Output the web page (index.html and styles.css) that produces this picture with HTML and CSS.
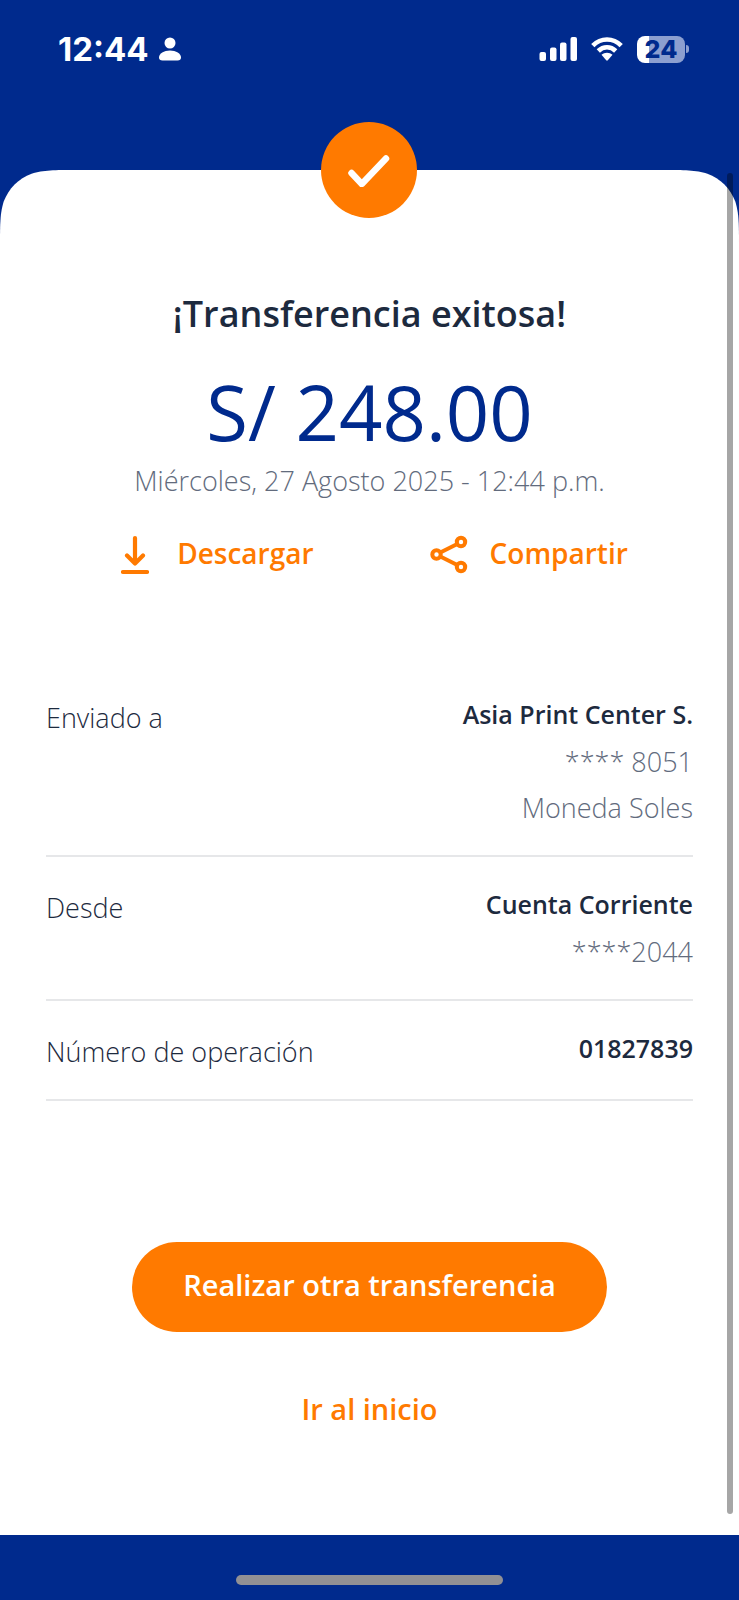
FILE: index.html
```html
<!DOCTYPE html>
<html lang="es">
<head>
<meta charset="utf-8">
<meta name="viewport" content="width=device-width, initial-scale=1">
<title>Transferencia exitosa</title>
<link rel="stylesheet" href="styles.css">
</head>
<body>
<header class="status">
  <div class="status-left">
    <span class="clock">12:44</span>
    <svg width="22" height="24" viewBox="0 0 22 24" fill="currentColor" aria-hidden="true"><circle cx="11" cy="6" r="5.5"/><path d="M0 20.500C0 16.500 5 13.500 11 13.500S22 16.500 22 20.500Q22 23.500 18.500 23.500H3.500Q0 23.500 0 20.500Z"/></svg>
  </div>
  <div class="status-right">
    <svg width="38" height="24" viewBox="0 0 38 24" fill="currentColor" aria-hidden="true"><rect x="0.500" y="15" width="6.500" height="9" rx="2"/><rect x="11" y="10.500" width="6.500" height="13.500" rx="2"/><rect x="21" y="5.500" width="6.500" height="18.500" rx="2"/><rect x="31.500" y="0" width="6.500" height="24" rx="2"/></svg>
    <svg width="32" height="24" viewBox="0 0 32 24" aria-hidden="true"><g fill="none" stroke="currentColor" stroke-width="4.600"><path d="M1.800 8.600C10 .4 22 .4 30.200 8.600"/><path d="M7.300 14C12.300 9 19.700 9 24.700 14"/></g><path d="M10.500 17.800C13.500 15 18.500 15 21.500 17.800L16.800 23.300Q16 24 15.200 23.300Z" fill="currentColor"/></svg>
    <div class="battery"><span class="battery-level">24</span><span class="battery-tip"></span></div>
  </div>
</header>

<main class="card">
  <div class="cap" aria-hidden="true">
    <svg width="77" height="77" viewBox="0 0 77 77"><path d="M77 0C54.400 0 43.400 0 31.600 3.700C18.600 8.500 8.500 18.600 3.700 31.600C0 43.400 0 54.400 0 77H77Z" fill="#fff"/></svg>
    <span class="cap-fill"></span>
    <svg width="77" height="77" viewBox="0 0 77 77"><path d="M0 0C22.600 0 33.600 0 45.400 3.700C58.400 8.500 68.500 18.600 73.300 31.600C77 43.400 77 54.400 77 77H0Z" fill="#fff"/></svg>
  </div>
  <div class="badge">
    <svg width="42" height="34" viewBox="0 0 42 34" fill="none" stroke="#fff" stroke-width="6.500" stroke-linecap="round" stroke-linejoin="round" aria-hidden="true"><path d="M3.500 20L13.800 31L38 5.500"/></svg>
  </div>
  <div class="scrollbar" aria-hidden="true"></div>

  <div class="content">
    <h1 class="title">¡Transferencia exitosa!</h1>
    <p class="amount">S/ 248.00</p>
    <p class="date">Miércoles, 27 Agosto 2025 - 12:44 p.m.</p>

    <div class="actions">
      <button class="action" type="button">
        <svg width="28" height="40" viewBox="0 0 28 40" fill="none" stroke="currentColor" stroke-width="4.200" stroke-linecap="round" stroke-linejoin="round" aria-hidden="true"><path d="M14 3V28M6 20.500L14 28.500L22 20.500M2 37H26"/></svg>
        <span>Descargar</span>
      </button>
      <button class="action" type="button">
        <svg width="38" height="40" viewBox="0 0 38 40" fill="none" stroke="currentColor" stroke-width="4" aria-hidden="true"><circle cx="6.500" cy="19.500" r="4.200"/><circle cx="31" cy="7" r="4.200"/><circle cx="31" cy="32" r="4.200"/><path d="M10.300 17.500L27.300 9M10.300 21.500L27.300 30"/></svg>
        <span>Compartir</span>
      </button>
    </div>

    <dl class="details">
      <div class="row">
        <dt>Enviado a</dt>
        <dd><strong>Asia Print Center S.</strong><span>**** 8051</span><span>Moneda Soles</span></dd>
      </div>
      <div class="row">
        <dt>Desde</dt>
        <dd><strong>Cuenta Corriente</strong><span>****2044</span></dd>
      </div>
      <div class="row">
        <dt>Número de operación</dt>
        <dd><strong>01827839</strong></dd>
      </div>
    </dl>

    <button class="primary" type="button">Realizar otra transferencia</button>
    <a class="home" href="#">Ir al inicio</a>
  </div>
</main>

<footer class="bottom"><div class="indicator"></div></footer>
</body>
</html>
```

FILE: styles.css
```css
* { box-sizing: border-box; }

body {
  margin: 0;
  min-height: 100vh;
  display: flex;
  flex-direction: column;
  background: #002a8d;
  color: #1d2a3e;
  font-family: "Open Sans", "Noto Sans", sans-serif;
}

svg { display: block; flex: none; }

button {
  border: 0;
  padding: 0;
  background: none;
  font: inherit;
  cursor: pointer;
}

.status {
  height: 170px;
  padding: 29px 50px 0 58px;
  display: flex;
  justify-content: space-between;
  align-items: flex-start;
  color: #fff;
  font-family: Inter, sans-serif;
}

.status-left,
.status-right {
  height: 40px;
  display: flex;
  align-items: center;
}

.status-left { gap: 10px; }
.status-right { gap: 14px; }

.clock {
  font-size: 33px;
  line-height: 42px;
  font-weight: 700;
}

.battery { display: flex; align-items: center; gap: 1px; }

.battery-level {
  width: 48px;
  height: 27px;
  border-radius: 8px;
  background: linear-gradient(90deg, #fff 24%, #8c9fd0 24%);
  color: #002a8d;
  font-size: 25px;
  line-height: 27px;
  font-weight: 800;
  text-align: center;
}

.battery-tip {
  width: 3px;
  height: 8px;
  border-radius: 0 3px 3px 0;
  background: #8c9fd0;
}

.card {
  position: relative;
  flex: 1;
  background: linear-gradient(transparent 77px, #fff 77px);
}

.cap { display: flex; }
.cap-fill { flex: 1; background: #fff; }

.badge {
  position: absolute;
  top: -48px;
  left: 50%;
  width: 96px;
  height: 96px;
  margin-left: -49px;
  border-radius: 50%;
  background: #ff7a00;
  display: flex;
  align-items: center;
  justify-content: center;
}

.scrollbar {
  position: absolute;
  top: 3px;
  right: 6px;
  bottom: 21px;
  width: 6px;
  border-radius: 3px;
  background: rgba(0, 0, 0, 0.35);
}

.content {
  padding: 41px 46px 0;
  display: flex;
  flex-direction: column;
  align-items: center;
}

.title {
  margin: 0;
  font-size: 36px;
  line-height: 52px;
  font-weight: 600;
}

.amount {
  margin: 28px 0 5px;
  color: #002a8d;
  font-size: 76px;
  line-height: 88px;
  font-weight: 400;
}

.date {
  margin: 0;
  color: #626b7d;
  font-size: 27px;
  line-height: 40px;
  font-weight: 300;
}

.actions {
  margin: 32px 0 91px;
  padding-left: 10px;
  display: flex;
  gap: 116px;
}

.action {
  display: flex;
  align-items: center;
  gap: 28px;
  color: #ff7a00;
  font-size: 28px;
  line-height: 40px;
  font-weight: 600;
}

.action span { padding-bottom: 3px; }

.action:last-child { gap: 22px; }

.details { width: 100%; margin: 0; }

.row {
  padding: 24px 0;
  border-bottom: 2px solid #e6e7e9;
  display: flex;
  justify-content: space-between;
  font-size: 27px;
  line-height: 46px;
  font-weight: 300;
}

.row dt { padding-top: 4px; }

.row dd {
  margin: 0;
  display: flex;
  flex-direction: column;
  align-items: flex-end;
  color: #626b7d;
}

.row strong {
  padding-bottom: 2px;
  color: #1d2a3e;
  font-size: 25px;
  font-weight: 600;
}

.primary {
  margin: 141px 0 56px;
  padding: 23px 51px 27px;
  border-radius: 60px;
  background: #ff7a00;
  color: #fff;
  font-size: 29px;
  line-height: 40px;
  font-weight: 600;
}

.home {
  color: #ff7a00;
  font-size: 29px;
  line-height: 42px;
  font-weight: 600;
  text-decoration: none;
}

.bottom {
  height: 65px;
  padding-top: 40px;
}

.indicator {
  width: 36%;
  height: 10px;
  margin: 0 auto;
  border-radius: 5px;
  background: #919094;
}
```
